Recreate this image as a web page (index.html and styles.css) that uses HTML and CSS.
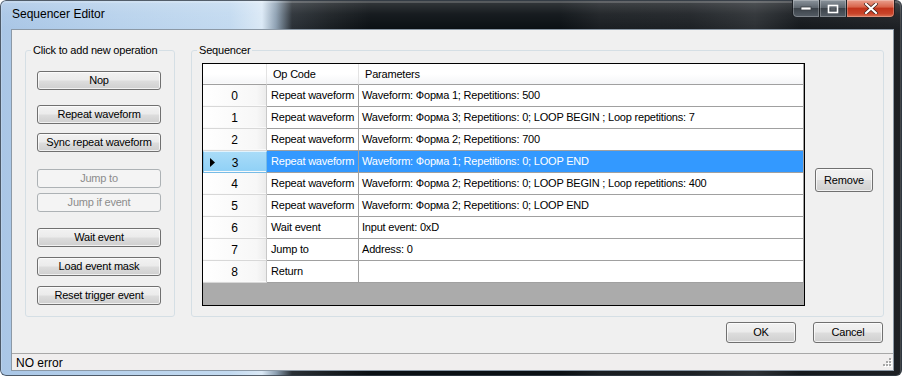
FILE: index.html
```html
<!DOCTYPE html>
<html>
<head>
<meta charset="utf-8">
<link rel="stylesheet" href="styles.css">
</head>
<body>
<div class="window">
  <div class="titlebar">
    <div class="title">Sequencer Editor</div>
    <div class="caption">
      <div class="cap cap-min"><svg width="12" height="6" viewBox="0 0 12 6"><rect x="1" y="1" width="10" height="3" fill="#fff" stroke="#3a3f44" stroke-width="0.8"/></svg></div>
      <div class="cap cap-max"><svg width="12" height="10" viewBox="0 0 12 10"><rect x="1.5" y="1.5" width="9" height="7" fill="none" stroke="#fff" stroke-width="1.6"/><rect x="3.5" y="4" width="5" height="2.5" fill="#5a6066"/></svg></div>
      <div class="cap cap-close"><svg width="14" height="11" viewBox="0 0 14 11"><path d="M2 1 L12 10 M12 1 L2 10" stroke="#3d1a14" stroke-width="3.6" stroke-linecap="square"/><path d="M2 1 L12 10 M12 1 L2 10" stroke="#fff" stroke-width="2.2" stroke-linecap="square"/></svg></div>
    </div>
  </div>
  <div class="client">
    <div class="main">
      <fieldset class="group group-ops">
        <legend>Click to add new operation</legend>
        <div class="ops">
          <button class="btn op mt14">Nop</button>
          <button class="btn op mt15">Repeat waveform</button>
          <button class="btn op mt9">Sync repeat waveform</button>
          <button class="btn op mt17" disabled>Jump to</button>
          <button class="btn op mt5" disabled>Jump if event</button>
          <button class="btn op mt16">Wait event</button>
          <button class="btn op mt10">Load event mask</button>
          <button class="btn op mt10">Reset trigger event</button>
        </div>
      </fieldset>
      <fieldset class="group group-seq">
        <legend>Sequencer</legend>
        <div class="seq">
          <div class="grid">
            <div class="row head">
              <div class="cell rh"></div>
              <div class="cell c1">Op Code</div>
              <div class="cell c2">Parameters</div>
            </div>
            <div class="row"><div class="cell rh">0</div><div class="cell c1">Repeat waveform</div><div class="cell c2">Waveform: Форма 1; Repetitions: 500</div></div>
            <div class="row"><div class="cell rh">1</div><div class="cell c1">Repeat waveform</div><div class="cell c2">Waveform: Форма 3; Repetitions: 0; LOOP BEGIN ; Loop repetitions: 7</div></div>
            <div class="row"><div class="cell rh">2</div><div class="cell c1">Repeat waveform</div><div class="cell c2">Waveform: Форма 2; Repetitions: 700</div></div>
            <div class="row sel"><div class="cell rh"><svg class="cur" width="5" height="9" viewBox="0 0 5 9"><path d="M0 0 L5 4.5 L0 9 Z" fill="#000"/></svg>3</div><div class="cell c1">Repeat waveform</div><div class="cell c2">Waveform: Форма 1; Repetitions: 0; LOOP END</div></div>
            <div class="row"><div class="cell rh">4</div><div class="cell c1">Repeat waveform</div><div class="cell c2">Waveform: Форма 2; Repetitions: 0; LOOP BEGIN ; Loop repetitions: 400</div></div>
            <div class="row"><div class="cell rh">5</div><div class="cell c1">Repeat waveform</div><div class="cell c2">Waveform: Форма 2; Repetitions: 0; LOOP END</div></div>
            <div class="row"><div class="cell rh">6</div><div class="cell c1">Wait event</div><div class="cell c2">Input event: 0xD</div></div>
            <div class="row"><div class="cell rh">7</div><div class="cell c1">Jump to</div><div class="cell c2">Address: 0</div></div>
            <div class="row"><div class="cell rh">8</div><div class="cell c1">Return</div><div class="cell c2"></div></div>
          </div>
          <button class="btn remove">Remove</button>
        </div>
      </fieldset>
    </div>
    <div class="actions">
      <button class="btn act">OK</button>
      <button class="btn act">Cancel</button>
    </div>
    <div class="status">
      <span class="status-text">NO error</span>
      <svg class="grip" width="11" height="11" viewBox="0 0 11 11">
        <g fill="#fff"><rect x="9" y="1" width="2" height="2"/><rect x="6" y="4" width="2" height="2"/><rect x="9" y="4" width="2" height="2"/><rect x="3" y="7" width="2" height="2"/><rect x="6" y="7" width="2" height="2"/><rect x="9" y="7" width="2" height="2"/></g>
        <g fill="#a7a7a7"><rect x="8" y="0" width="2" height="2"/><rect x="5" y="3" width="2" height="2"/><rect x="8" y="3" width="2" height="2"/><rect x="2" y="6" width="2" height="2"/><rect x="5" y="6" width="2" height="2"/><rect x="8" y="6" width="2" height="2"/></g>
      </svg>
    </div>
  </div>
</div>
</body>
</html>
```
FILE: styles.css
```css
html, body {
  margin: 0;
  padding: 0;
  background: #ffffff;
}
body {
  font-family: "Liberation Sans", Arial, sans-serif;
  font-size: 11px;
  letter-spacing: -0.2px;
  color: #000;
}
.window {
  width: 902px;
  height: 376px;
  box-sizing: border-box;
  border-radius: 6px;
  overflow: hidden;
  padding: 0 8px 5px 11px;
  display: flex;
  flex-direction: column;
  background:
    linear-gradient(180deg, rgba(255,255,255,0.18) 0px, rgba(255,255,255,0.05) 14px, rgba(0,0,0,0) 29px),
    linear-gradient(90deg, #a9c6e6 0px, #b8d2ec 120px, #c3daf0 230px, #dbe9f6 262px, #8da0b2 276px, #2a3036 292px, #1a1f23 330px, #0b1014 370px, #0b1014 560px, #1a1e22 600px, #1d2125 690px, #2c3034 755px, #15191d 800px, #1d2024 902px);
  box-shadow: inset 0 0 0 1px rgba(40,50,60,0.75), inset 0 1px 0 2px rgba(255,255,255,0.18);
}
.titlebar {
  height: 29px;
  margin-left: -11px;
  margin-right: -8px;
  display: flex;
  align-items: flex-start;
  justify-content: space-between;
  flex: none;
}
.title {
  padding-left: 12px;
  line-height: 29px;
  font-size: 12px;
  letter-spacing: 0;
  color: #000;
}
.caption {
  display: flex;
  margin-right: 7px;
  margin-top: 0;
}
.cap {
  height: 18px;
  box-sizing: border-box;
  display: flex;
  align-items: center;
  justify-content: center;
  border: 1px solid rgba(20,24,28,0.9);
  border-top: none;
  box-shadow: inset 0 0 0 1px rgba(255,255,255,0.25);
}
.cap-min {
  width: 27px;
  border-radius: 0 0 0 5px;
  background: linear-gradient(180deg, #8b949c 0%, #5f676f 45%, #3c434a 50%, #555d66 100%);
  border-right: none;
}
.cap-max {
  width: 28px;
  background: linear-gradient(180deg, #8b949c 0%, #5f676f 45%, #3c434a 50%, #555d66 100%);
}
.cap-close {
  width: 48px;
  border-left: none;
  border-radius: 0 0 5px 0;
  background: linear-gradient(180deg, #eaa08e 0%, #d9664d 40%, #c2341b 50%, #c9442a 80%, #dc7557 100%);
}
.client {
  flex: 1;
  background: #f0f0f0;
  border: 1px solid #8c99a6;
  display: flex;
  flex-direction: column;
}
.main {
  display: flex;
  height: 274px;
  padding: 13px 0 0 13px;
  gap: 16px;
  flex: none;
}
.group {
  margin: 0;
  padding: 0;
  border: 1px solid #d5dfe5;
  border-radius: 3px;
  box-sizing: border-box;
  height: 274px;
  min-width: 0;
}
.group legend {
  margin-left: 5px;
  padding: 0 2px;
  line-height: 14px;
  font-size: 11px;
}
.group-ops {
  width: 150px;
}
.group-seq {
  width: 693px;
}
.ops {
  display: flex;
  flex-direction: column;
  padding-left: 11px;
}
.btn {
  font-family: "Liberation Sans", Arial, sans-serif;
  font-size: 11px;
  letter-spacing: -0.2px;
  color: #000;
  box-sizing: border-box;
  border: 1px solid #707070;
  border-radius: 3px;
  padding: 0;
  margin: 0;
  background: linear-gradient(180deg, #f2f2f2 0%, #ebebeb 48%, #dddddd 52%, #cfcfcf 100%);
  box-shadow: inset 0 0 0 1px rgba(255,255,255,0.7);
  line-height: 1;
}
.btn:disabled {
  border-color: #adb2b5;
  background: #f4f4f4;
  color: #8c8c8c;
  box-shadow: none;
}
.op {
  width: 124px;
  height: 19px;
}
.mt14 { margin-top: 14px; }
.mt15 { margin-top: 15px; }
.mt9 { margin-top: 9px; }
.mt17 { margin-top: 17px; }
.mt5 { margin-top: 5px; }
.mt16 { margin-top: 16px; }
.mt10 { margin-top: 10px; }
.seq {
  display: flex;
  align-items: flex-start;
  padding: 6px 0 0 10px;
}
.grid {
  width: 603px;
  height: 243px;
  box-sizing: border-box;
  border: 1px solid #000;
  background: #ababab;
}
.row {
  display: flex;
  height: 22px;
}
.row.head {
  height: 21px;
}
.cell {
  box-sizing: border-box;
  height: 100%;
  border-right: 1px solid #a0a0a0;
  border-bottom: 1px solid #a0a0a0;
  background: #fff;
  line-height: 21px;
  white-space: nowrap;
  overflow: hidden;
}
.head .cell {
  line-height: 20px;
  background: linear-gradient(180deg, #ffffff 0%, #ffffff 50%, #f4f5f7 100%);
  border-right: 1px solid #e3e3e3;
  border-bottom: 1px solid #a0a0a0;
  padding-left: 6px;
}
.head .cell.c2 {
  border-right: 1px solid #a0a0a0;
}
.rh {
  width: 64px;
  text-align: center;
  position: relative;
  background: linear-gradient(90deg, #ffffff 0%, #f7f7f7 85%, #ececec 100%);
  border-right: 1px solid #c8c8c8;
  border-bottom: 1px solid #d8d8d8;
  box-shadow: inset 0 -1px 0 #fafafa;
  padding-top: 1px;
  font-size: 12px;
}
.head .rh {
  padding-left: 0;
}
.c1 {
  width: 92px;
  padding-left: 4px;
}
.c2 {
  width: 445px;
  padding-left: 3px;
}
.sel .c1, .sel .c2 {
  background: #3399ff;
  color: #fff;
}
.sel .rh {
  background: linear-gradient(180deg, #a9dcf8 0%, #8fd0f6 100%);
  border: 1px solid #77bbe6;
  border-top-color: #e2f3fd;
}
.cur {
  position: absolute;
  left: 6px;
  top: 6px;
}
.remove {
  width: 58px;
  height: 24px;
  margin: 105px 0 0 10px;
}
.actions {
  display: flex;
  justify-content: flex-end;
  gap: 17px;
  padding: 5px 10px 0 0;
  height: 26px;
  flex: none;
}
.act {
  width: 70px;
  height: 21px;
}
.status {
  margin-top: 5px;
  flex: 1;
  border-top: 1px solid #a8a8a8;
  background: #f0eeee;
  display: flex;
  align-items: center;
  justify-content: space-between;
  padding: 0 1px 0 4px;
  position: relative;
}
.status-text {
  font-size: 12px;
  letter-spacing: 0;
  padding-top: 1px;
}
.grip {
  align-self: flex-end;
  margin-bottom: 1px;
}
```
